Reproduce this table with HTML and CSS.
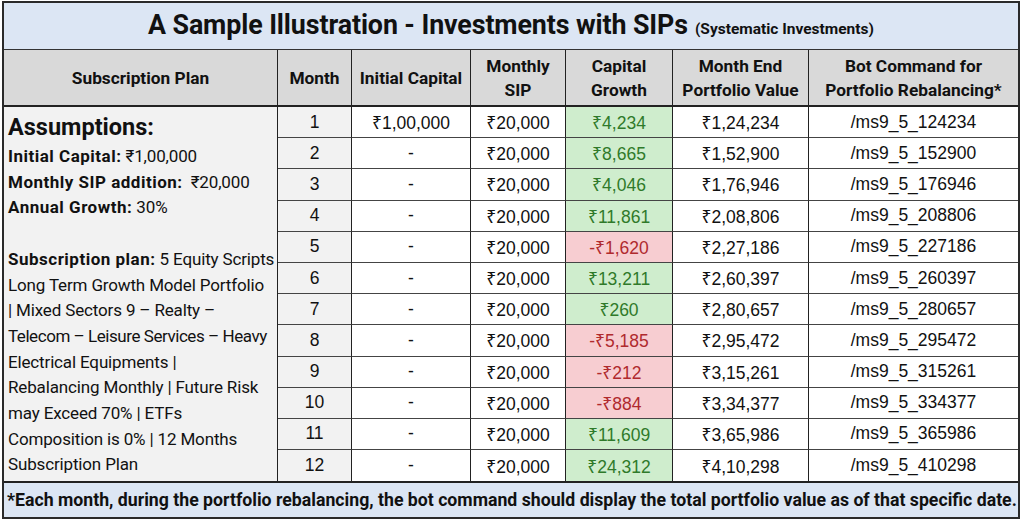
FILE: index.html
```html
<!DOCTYPE html>
<html lang="en">
<head>
<meta charset="utf-8">
<title>SIP Illustration</title>
<link rel="stylesheet" href="styles.css">
</head>
<body>
<div class="sheet">
  <div class="title"><span class="title-main">A Sample Illustration - Investments with SIPs</span> <span class="title-sub">(Systematic Investments)</span></div>
  <div class="grid">
    <div class="hd">Subscription Plan</div>
    <div class="hd">Month</div>
    <div class="hd">Initial Capital</div>
    <div class="hd">Monthly<br>SIP</div>
    <div class="hd">Capital<br>Growth</div>
    <div class="hd">Month End<br>Portfolio Value</div>
    <div class="hd last">Bot Command for<br>Portfolio Rebalancing*</div>

    <div class="assume">
      <div class="assume-title">Assumptions:</div>
      <div class="line"><b>Initial Capital:</b> ₹1,00,000</div>
      <div class="line"><b>Monthly SIP addition:</b>&nbsp; ₹20,000</div>
      <div class="line"><b>Annual Growth:</b> 30%</div>
      <div class="line">&nbsp;</div>
      <div class="line"><b>Subscription plan:</b> 5 Equity Scripts</div>
      <div class="line">Long Term Growth Model Portfolio</div>
      <div class="line">| Mixed Sectors 9 – Realty –</div>
      <div class="line tight">Telecom – Leisure Services – Heavy</div>
      <div class="line">Electrical Equipments |</div>
      <div class="line">Rebalancing Monthly | Future Risk</div>
      <div class="line">may Exceed 70% | ETFs</div>
      <div class="line">Composition is 0% | 12 Months</div>
      <div class="line">Subscription Plan</div>
    </div>

    <div class="c month">1</div><div class="c">₹1,00,000</div><div class="c">₹20,000</div><div class="c up">₹4,234</div><div class="c">₹1,24,234</div><div class="c last">/ms9_5_124234</div>
    <div class="c month">2</div><div class="c">-</div><div class="c">₹20,000</div><div class="c up">₹8,665</div><div class="c">₹1,52,900</div><div class="c last">/ms9_5_152900</div>
    <div class="c month">3</div><div class="c">-</div><div class="c">₹20,000</div><div class="c up">₹4,046</div><div class="c">₹1,76,946</div><div class="c last">/ms9_5_176946</div>
    <div class="c month">4</div><div class="c">-</div><div class="c">₹20,000</div><div class="c up">₹11,861</div><div class="c">₹2,08,806</div><div class="c last">/ms9_5_208806</div>
    <div class="c month">5</div><div class="c">-</div><div class="c">₹20,000</div><div class="c down">-₹1,620</div><div class="c">₹2,27,186</div><div class="c last">/ms9_5_227186</div>
    <div class="c month">6</div><div class="c">-</div><div class="c">₹20,000</div><div class="c up">₹13,211</div><div class="c">₹2,60,397</div><div class="c last">/ms9_5_260397</div>
    <div class="c month">7</div><div class="c">-</div><div class="c">₹20,000</div><div class="c up">₹260</div><div class="c">₹2,80,657</div><div class="c last">/ms9_5_280657</div>
    <div class="c month">8</div><div class="c">-</div><div class="c">₹20,000</div><div class="c down">-₹5,185</div><div class="c">₹2,95,472</div><div class="c last">/ms9_5_295472</div>
    <div class="c month">9</div><div class="c">-</div><div class="c">₹20,000</div><div class="c down">-₹212</div><div class="c">₹3,15,261</div><div class="c last">/ms9_5_315261</div>
    <div class="c month">10</div><div class="c">-</div><div class="c">₹20,000</div><div class="c down">-₹884</div><div class="c">₹3,34,377</div><div class="c last">/ms9_5_334377</div>
    <div class="c month">11</div><div class="c">-</div><div class="c">₹20,000</div><div class="c up">₹11,609</div><div class="c">₹3,65,986</div><div class="c last">/ms9_5_365986</div>
    <div class="c month bottom">12</div><div class="c bottom">-</div><div class="c bottom">₹20,000</div><div class="c up bottom">₹24,312</div><div class="c bottom">₹4,10,298</div><div class="c last bottom">/ms9_5_410298</div>
  </div>
  <div class="footer">*Each month, during the portfolio rebalancing, the bot command should display the total portfolio value as of that specific date.</div>
</div>
</body>
</html>
```

FILE: styles.css
```css
* { box-sizing: border-box; }

body {
  margin: 0;
  background: #ffffff;
  font-family: Roboto, "Noto Sans", sans-serif;
  color: #111;
}

.sheet {
  margin: 1px 0 0 2px;
  width: 1018px;
  border: 2px solid #2a2a2a;
}

.title {
  height: 47px;
  background: #dce6f4;
  border-bottom: 1px solid #333;
  display: flex;
  align-items: baseline;
  justify-content: center;
  padding-top: 6px;
  white-space: nowrap;
}

.title-main {
  font-weight: 700;
  font-size: 26.8px;
  letter-spacing: -0.1px;
}

.title-sub {
  font-weight: 700;
  font-size: 15.5px;
  margin-left: 7px;
}

.grid {
  display: grid;
  grid-template-columns: 274px 74px 119px 95px 107px 136px 209px;
  grid-template-rows: 57px repeat(12, 31.2px);
}

.hd {
  background: #d9d9d9;
  font-weight: 700;
  font-size: 17.3px;
  line-height: 24px;
  text-align: center;
  display: flex;
  align-items: center;
  justify-content: center;
  border-right: 1px solid #222;
  border-bottom: 2px solid #222;
  white-space: nowrap;
}

.last { border-right: none !important; }

.assume {
  grid-column: 1;
  grid-row: 2 / span 12;
  background: #f2f2f2;
  border-right: 1px solid #222;
  padding: 4px 0 0 4px;
  font-size: 17px;
  white-space: nowrap;
}

.assume-title {
  font-size: 23.5px;
  font-weight: 700;
  line-height: 33px;
}

.line {
  line-height: 25.7px;
  letter-spacing: -0.15px;
}

.line.tight { letter-spacing: -0.45px; }

.line b {
  font-weight: 700;
  letter-spacing: 0.5px;
}

.c {
  font-family: "Liberation Sans", "Noto Sans", "DejaVu Sans", sans-serif;
  font-size: 17.5px;
  display: flex;
  align-items: center;
  justify-content: center;
  border-right: 1px solid #222;
  border-bottom: 1px solid #444;
  background: #fff;
}

.month { background: #f2f2f2; }

.up {
  background: #cfedcd;
  color: #2f7a2a;
}

.down {
  background: #f7cdd1;
  color: #b02a2e;
}

.bottom { border-bottom: none; }

.footer {
  height: 36px;
  background: #dce6f4;
  border-top: 2px solid #222;
  font-weight: 700;
  font-size: 17.7px;
  display: flex;
  align-items: center;
  padding-left: 3px;
  white-space: nowrap;
}
```
